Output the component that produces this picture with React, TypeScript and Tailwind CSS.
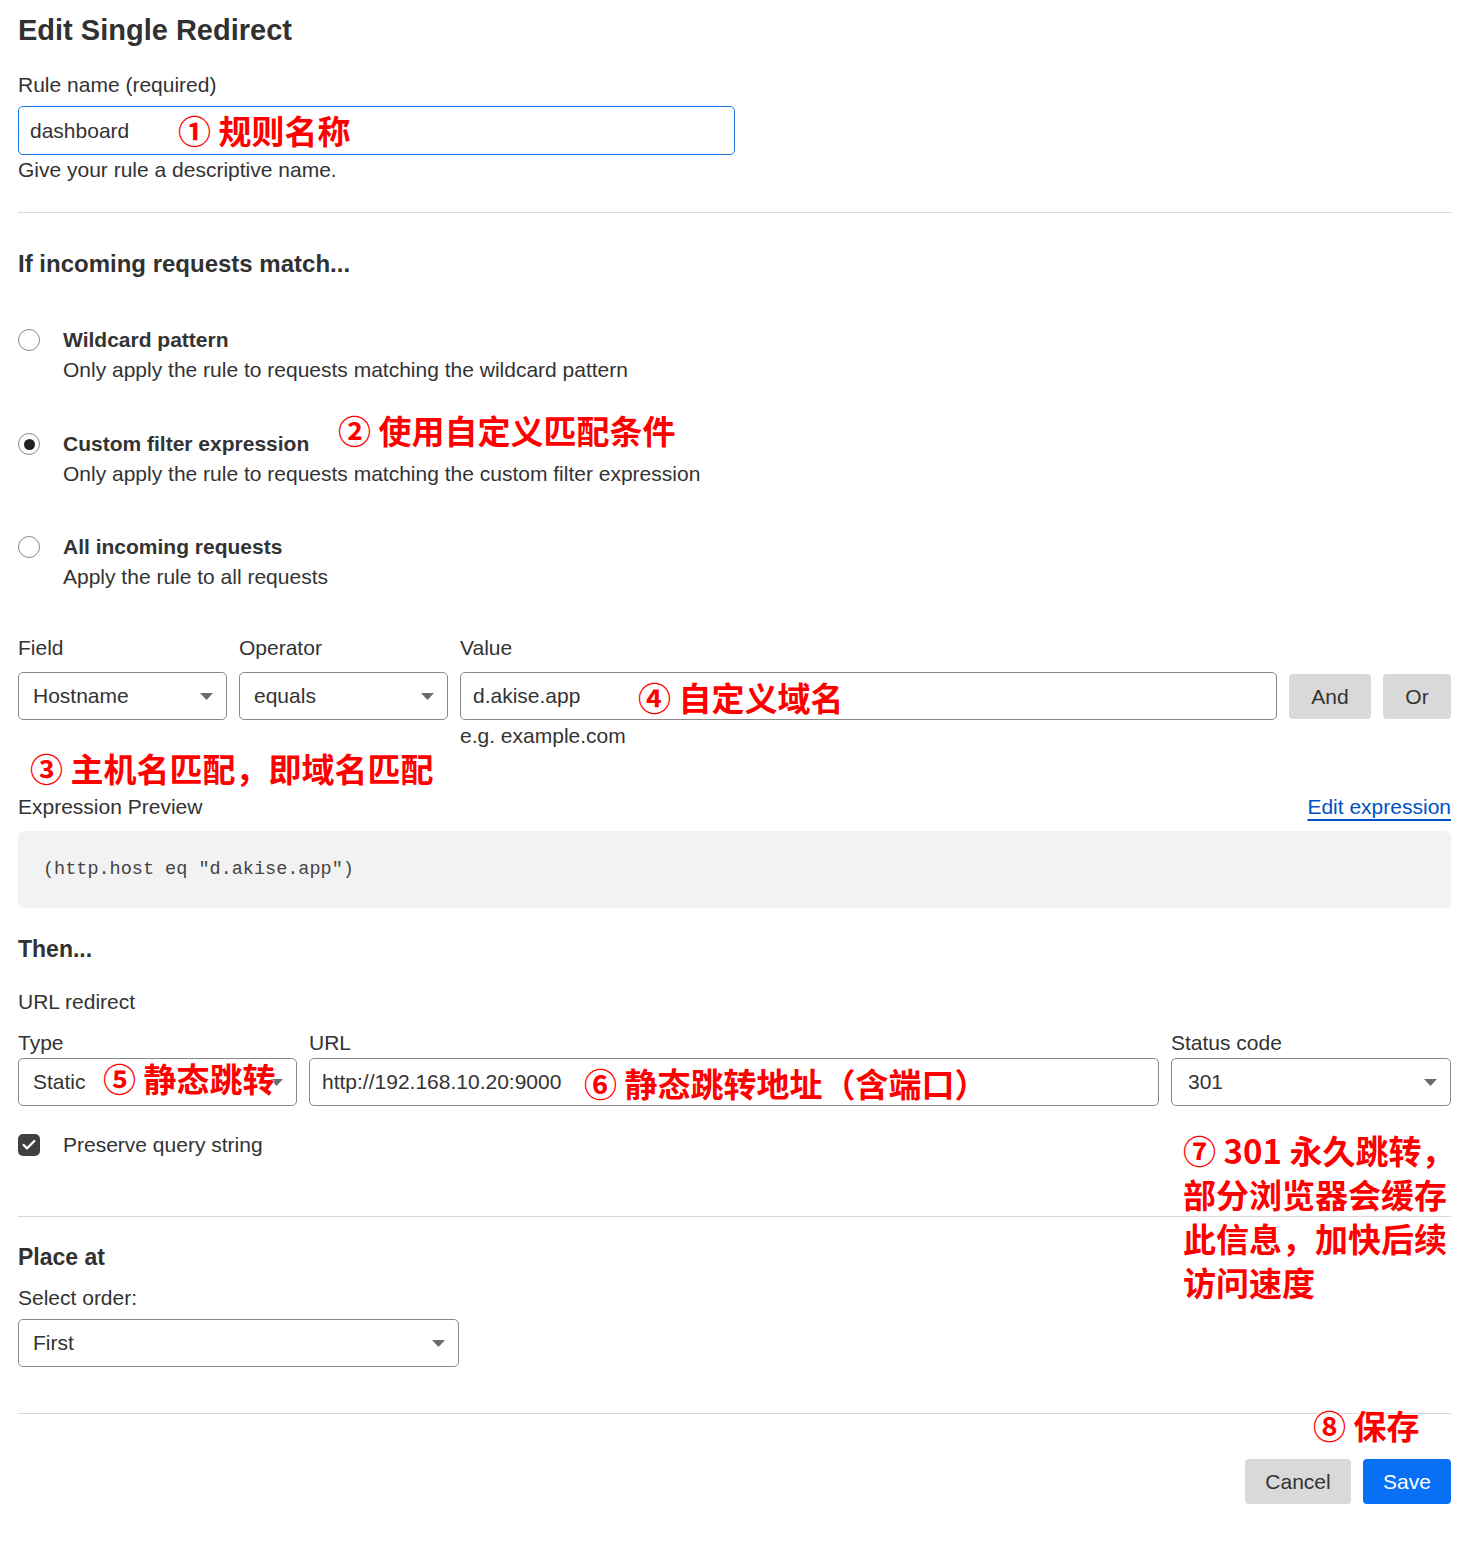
import { Check } from 'lucide-react'

const font = "font-['Liberation_Sans',Arial,sans-serif]"
const note =
  "absolute whitespace-nowrap font-['Noto_Sans_CJK_SC',sans-serif] text-[33px] font-bold leading-[40px] text-[#ff0000] [text-shadow:0_0_3px_#fff,0_0_2px_#fff]"

function Arrow() {
  return (
    <svg width="13" height="7" viewBox="0 0 13 7" className="shrink-0">
      <path d="M0 0h13L6.5 7z" fill="#6b6b6b" />
    </svg>
  )
}

function SelectBox({ value, className = '' }: { value: string; className?: string }) {
  return (
    <div
      className={`flex h-[48px] items-center justify-between rounded-[5px] border border-[#8a8a8a] bg-white pl-[14px] pr-[13px] ${className}`}
    >
      <span>{value}</span>
      <Arrow />
    </div>
  )
}

function TextBox({ value, className = '' }: { value: string; className?: string }) {
  return (
    <div className={`flex h-[48px] items-center rounded-[5px] border border-[#8a8a8a] bg-white px-[12px] ${className}`}>
      {value}
    </div>
  )
}

function Radio({ checked, title, desc, className = '' }: { checked?: boolean; title: string; desc: string; className?: string }) {
  return (
    <div className={`flex gap-[23px] ${className}`}>
      <div className="flex h-[30px] items-center">
        <div className="flex h-[22px] w-[22px] items-center justify-center rounded-full border border-[#8a8a8a] bg-white">
          {checked ? <div className="h-[11px] w-[11px] rounded-full bg-[#222]" /> : null}
        </div>
      </div>
      <div className="flex flex-col">
        <span className="text-[21px] font-bold leading-[30px]">{title}</span>
        <span className="leading-[30px]">{desc}</span>
      </div>
    </div>
  )
}

export default function App() {
  return (
    <div className={`relative min-h-[1544px] bg-white pl-[18px] pr-[17px] pt-[10px] text-[21px] text-[#333] ${font}`}>
      <h1 className="text-[29px] font-bold leading-[40px] text-[#313131]">Edit Single Redirect</h1>

      <div className="mt-[21px] leading-[28px]">Rule name (required)</div>
      <div className="mt-[7px] flex h-[49px] w-[717px] items-center rounded-[5px] border border-[#1a73e8] px-[11px]">
        dashboard
      </div>
      <div className="mt-[1px] leading-[28px]">Give your rule a descriptive name.</div>

      <div className="mt-[28px] h-px bg-[#d9d9d9]" />

      <h2 className="mt-[35px] text-[24px] font-bold leading-[32px] text-[#313131]">If incoming requests match...</h2>

      <Radio className="mt-[45px]" title="Wildcard pattern" desc="Only apply the rule to requests matching the wildcard pattern" />
      <Radio
        className="mt-[44px]"
        checked
        title="Custom filter expression"
        desc="Only apply the rule to requests matching the custom filter expression"
      />
      <Radio className="mt-[43px]" title="All incoming requests" desc="Apply the rule to all requests" />

      <div className="mt-[42px] grid grid-cols-[209px_209px_1fr_82px_68px] gap-x-3">
        <div className="leading-[28px]">Field</div>
        <div className="leading-[28px]">Operator</div>
        <div className="leading-[28px]">Value</div>
        <div />
        <div />
        <SelectBox className="mt-[10px]" value="Hostname" />
        <SelectBox className="mt-[10px]" value="equals" />
        <TextBox className="mt-[10px]" value="d.akise.app" />
        <button className="mt-[12px] h-[45px] rounded-[4px] bg-[#d9d9d9] text-[#333]">And</button>
        <button className="mt-[12px] h-[45px] rounded-[4px] bg-[#d9d9d9] text-[#333]">Or</button>
        <div />
        <div />
        <div className="mt-[2px] leading-[28px]">e.g. example.com</div>
      </div>

      <div className="mt-[43px] flex items-center justify-between leading-[28px]">
        <span>Expression Preview</span>
        <a className="text-[#0051c3] underline decoration-[1.5px] underline-offset-[5px]">Edit expression</a>
      </div>
      <div className="mt-[10px] flex h-[77px] items-center rounded-[6px] bg-[#f2f2f2] px-[25px] font-['Liberation_Mono',monospace] text-[18.5px] text-[#444]">
        (http.host eq "d.akise.app")
      </div>

      <h2 className="mt-[25px] text-[23px] font-bold leading-[32px] text-[#313131]">Then...</h2>
      <div className="mt-[23px] leading-[28px]">URL redirect</div>

      <div className="mt-[13px] grid grid-cols-[279px_1fr_280px] gap-x-3">
        <div className="leading-[28px]">Type</div>
        <div className="leading-[28px]">URL</div>
        <div className="leading-[28px]">Status code</div>
        <SelectBox className="mt-[1px]" value="Static" />
        <TextBox className="mt-[1px]" value="http://192.168.10.20:9000" />
        <SelectBox className="mt-[1px] pl-[16px]" value="301" />
      </div>

      <div className="mt-[25px] flex items-center gap-[23px] leading-[28px]">
        <div className="flex h-[22px] w-[22px] items-center justify-center rounded-[5px] bg-[#404040]">
          <Check className="h-[16px] w-[16px] text-white" strokeWidth={3.5} />
        </div>
        <span>Preserve query string</span>
      </div>

      <div className="mt-[57px] h-px bg-[#d9d9d9]" />

      <h2 className="mt-[24px] text-[23px] font-bold leading-[32px] text-[#313131]">Place at</h2>
      <div className="mt-[11px] leading-[28px]">Select order:</div>
      <SelectBox className="mt-[7px] w-[441px]" value="First" />

      <div className="mt-[46px] h-px bg-[#d9d9d9]" />

      <div className="mt-[45px] flex justify-end gap-3">
        <button className="h-[45px] w-[106px] rounded-[4px] bg-[#d9d9d9] text-[#333]">Cancel</button>
        <button className="h-[45px] w-[88px] rounded-[4px] bg-[#086ff7] text-white">Save</button>
      </div>

      <div className={`${note} left-[178px] top-[110px]`}>① 规则名称</div>
      <div className={`${note} left-[338px] top-[410px]`}>② 使用自定义匹配条件</div>
      <div className={`${note} left-[30px] top-[748px]`}>③ 主机名匹配，即域名匹配</div>
      <div className={`${note} left-[638px] top-[677px]`}>④ 自定义域名</div>
      <div className={`${note} left-[103px] top-[1058px]`}>⑤ 静态跳转</div>
      <div className={`${note} left-[584px] top-[1063px]`}>⑥ 静态跳转地址（含端口）</div>
      <div className={`${note} left-[1183px] top-[1128px] leading-[44px]`}>
        ⑦ 301 永久跳转，
        <br />
        部分浏览器会缓存
        <br />
        此信息，加快后续
        <br />
        访问速度
      </div>
      <div className={`${note} left-[1313px] top-[1405px]`}>⑧ 保存</div>
    </div>
  )
}
